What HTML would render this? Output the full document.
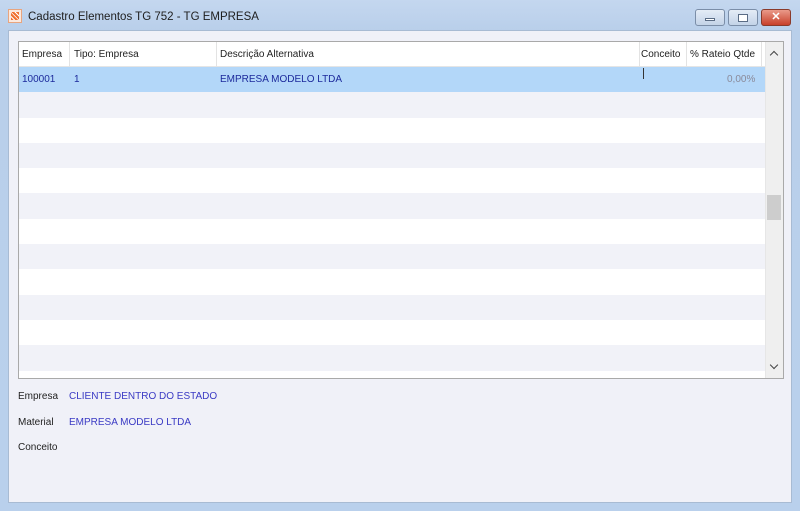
<!DOCTYPE html><html><head><meta charset="utf-8"><style>
*{margin:0;padding:0;box-sizing:border-box}
body{width:800px;height:511px;overflow:hidden;font-family:"Liberation Sans",sans-serif;font-size:10px;background:linear-gradient(#c4d7ef,#b9cfea 30px,#b9d0ec);position:relative}
.abs{position:absolute}
.title{left:28px;top:11px;font-size:11.5px;color:#1e1e1e}
.btn{top:9px;height:17px;width:30px;border:1px solid #7b8ea8;border-radius:3px;background:linear-gradient(#e4ecf6,#c3d3e8)}
.client{left:8px;top:30px;width:784px;height:473px;background:#f0f1f8;border:1px solid #a8bbd3}
.grid{left:18px;top:41px;width:766px;height:338px;border:1px solid #a9a9a9;background:#fff;overflow:hidden}
.hdr{height:25px;border-bottom:1px solid #e5e5e5;background:#fff;position:relative}
.hdr span{position:absolute;top:7px;color:#222}
.sep{position:absolute;top:0;height:25px;width:1px;background:#e3e3e3}
.row{height:25.3px;position:relative}
.row span{position:absolute;top:7px;color:#1c2a9c}
.sh{background:#f1f2f8}
.lbl{font-size:10px;color:#222}
.val{font-size:10px;color:#3a3ac4}
.chev{position:absolute;width:6px;height:6px;border-left:1.5px solid #444;border-top:1.5px solid #444}
</style></head><body>
<div class="abs" style="left:8px;top:9px;width:14px;height:14px;background:#fbe8dd;border:1px solid #e8a57f"></div>
<div class="abs" style="left:11px;top:12px;width:8px;height:8px;background:repeating-linear-gradient(45deg,#f07030 0 2px,#fff 2px 3px)"></div>
<div class="abs title">Cadastro Elementos TG 752 - TG EMPRESA</div>
<div class="abs btn" style="left:695px"><div class="abs" style="left:9px;top:8px;width:10px;height:3px;background:#fff;border:1px solid #5a6c85"></div></div>
<div class="abs btn" style="left:728px"><div class="abs" style="left:9px;top:4px;width:10px;height:8px;background:#fff;border:1px solid #5a6c85"></div></div>
<div class="abs btn" style="left:761px;background:linear-gradient(#e99a8a,#c8402a);border-color:#8a3a2a;color:#fff;font-weight:bold;text-align:center;line-height:15px;font-size:11px">✕</div>
<div class="abs client"></div>
<div class="abs grid">
<div class="hdr"><span style="left:3px">Empresa</span><div class="sep" style="left:50px"></div><span style="left:55px">Tipo: Empresa</span><div class="sep" style="left:197px"></div><span style="left:201px">Descrição Alternativa</span><div class="sep" style="left:620px"></div><span style="left:622px">Conceito</span><div class="sep" style="left:667px"></div><span style="left:671px">% Rateio Qtde</span><div class="sep" style="left:742px"></div></div>
<div class="row" style="background:#b3d7f9;width:746px"><span style="left:3px">100001</span><span style="left:55px">1</span><span style="left:201px">EMPRESA MODELO LTDA</span><div class="abs" style="left:624px;top:1px;width:1px;height:11px;background:#333"></div><span style="left:708px;color:#8a8a9a">0,00%</span></div>
<div class="row sh"></div><div class="row"></div><div class="row sh"></div><div class="row"></div><div class="row sh"></div><div class="row"></div><div class="row sh"></div><div class="row"></div><div class="row sh"></div><div class="row"></div><div class="row sh"></div><div class="row"></div>
<div class="abs" style="left:746px;top:0;width:18px;height:336px;background:#efefef;border-left:1px solid #e6e6e6"></div>
<div class="abs" style="left:748px;top:153px;width:14px;height:25px;background:#cdcdcd"></div>
<div class="chev" style="left:752px;top:10px;transform:rotate(45deg)"></div>
<div class="chev" style="left:752px;top:320px;transform:rotate(225deg)"></div>
</div>
<div class="abs lbl" style="left:18px;top:391px">Empresa</div><div class="abs val" style="left:69px;top:391px">CLIENTE DENTRO DO ESTADO</div>
<div class="abs lbl" style="left:18px;top:417px">Material</div><div class="abs val" style="left:69px;top:417px">EMPRESA MODELO LTDA</div>
<div class="abs lbl" style="left:18px;top:442px">Conceito</div>
</body></html>
